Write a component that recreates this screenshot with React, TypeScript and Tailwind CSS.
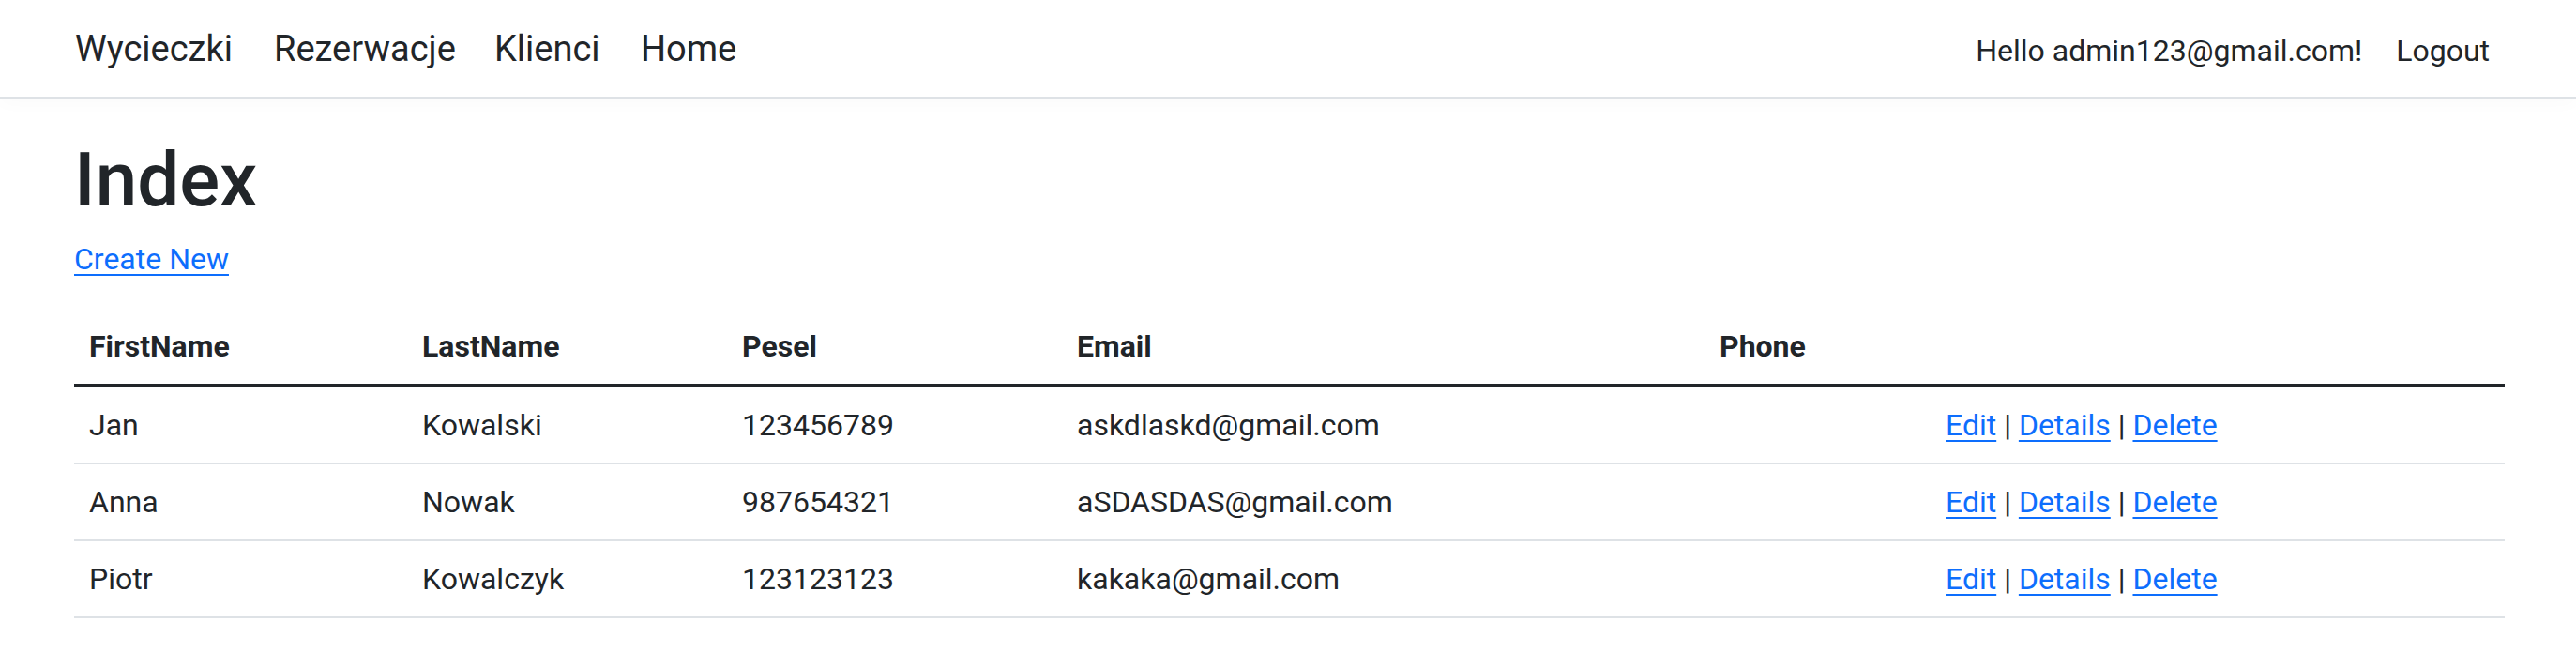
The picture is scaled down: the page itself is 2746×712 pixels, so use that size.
import React from 'react';

interface Client {
  firstName: string;
  lastName: string;
  pesel: string;
  email: string;
  phone: string;
}

const clients: Client[] = [
  { firstName: 'Jan', lastName: 'Kowalski', pesel: '123456789', email: 'askdlaskd@gmail.com', phone: '' },
  { firstName: 'Anna', lastName: 'Nowak', pesel: '987654321', email: 'aSDASDAS@gmail.com', phone: '' },
  { firstName: 'Piotr', lastName: 'Kowalczyk', pesel: '123123123', email: 'kakaka@gmail.com', phone: '' },
];

const font = { fontFamily: 'Roboto, "Liberation Sans", sans-serif' };

export default function App() {
  return (
    <div className="min-h-screen bg-white text-[#212529]" style={font}>
      {/* Navbar */}
      <header className="box-border flex h-[105px] items-center border-b-2 border-[#dee2e6] bg-white pl-[80px] pr-[92px] shadow-[0_6px_18px_rgba(0,0,0,0.02)]">
        <nav className="flex items-center text-[38px] leading-[60px] text-[#212529]">
          <a className="w-[212px]">Wycieczki</a>
          <a className="w-[235px]">Rezerwacje</a>
          <a className="w-[156px]">Klienci</a>
          <a>Home</a>
        </nav>
        <div className="ml-auto flex items-center gap-[36px] pt-[4px] text-[32px] leading-[48px]">
          <span>Hello admin123@gmail.com!</span>
          <a>Logout</a>
        </div>
      </header>

      {/* Content */}
      <main className="pl-[79px] pr-[76px] pt-[39px]">
        <h1 className="mb-[12px] text-[80px] font-medium leading-[96px]">Index</h1>
        <p className="mb-[29px] text-[32px] leading-[48px]">
          <a className="text-[#0d6efd] underline decoration-2 underline-offset-[5px]">Create New</a>
        </p>

        <table className="w-full table-fixed border-collapse text-left text-[32px] leading-[48px]">
          <thead>
            <tr className="border-b-4 border-[#212529]">
              <th className="w-[355px] p-[16px] font-bold">FirstName</th>
              <th className="w-[341px] p-[16px] font-bold">LastName</th>
              <th className="w-[357px] p-[16px] font-bold">Pesel</th>
              <th className="w-[685px] p-[16px] font-bold">Email</th>
              <th className="w-[241px] p-[16px] font-bold">Phone</th>
              <th className="p-[16px]"></th>
            </tr>
          </thead>
          <tbody>
            {clients.map((c) => (
              <tr key={c.pesel} className="border-b-2 border-[#dee2e6]">
                <td className="p-[16px]">{c.firstName}</td>
                <td className="p-[16px]">{c.lastName}</td>
                <td className="p-[16px]">{c.pesel}</td>
                <td className="p-[16px]">{c.email}</td>
                <td className="p-[16px]">{c.phone}</td>
                <td className="p-[16px] whitespace-nowrap">
                  <a className="text-[#0d6efd] underline decoration-2 underline-offset-[5px]">Edit</a>
                  {' | '}
                  <a className="text-[#0d6efd] underline decoration-2 underline-offset-[5px]">Details</a>
                  {' | '}
                  <a className="text-[#0d6efd] underline decoration-2 underline-offset-[5px]">Delete</a>
                </td>
              </tr>
            ))}
          </tbody>
        </table>
      </main>
    </div>
  );
}
